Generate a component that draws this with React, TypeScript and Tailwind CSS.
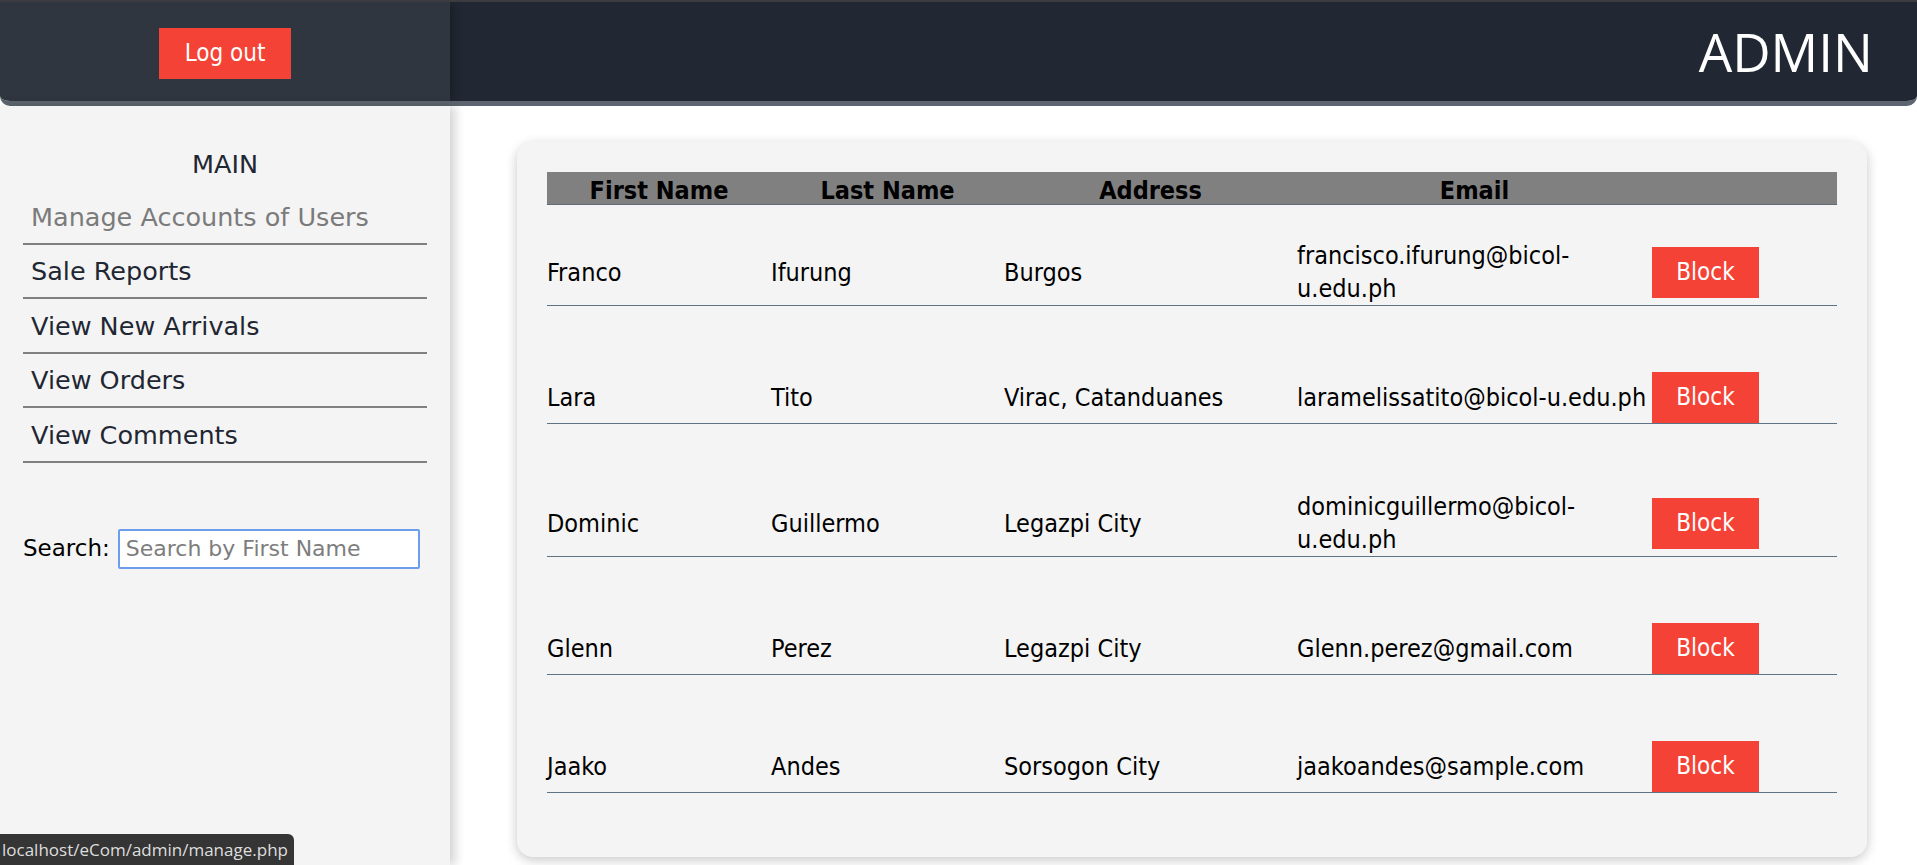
import { useState } from 'react';

type User = { id: number; first: string; last: string; address: string; email: string };

const users: User[] = [
  { id: 1, first: 'Franco', last: 'Ifurung', address: 'Burgos', email: 'francisco.ifurung@bicol-u.edu.ph' },
  { id: 2, first: 'Lara', last: 'Tito', address: 'Virac, Catanduanes', email: 'laramelissatito@bicol-u.edu.ph' },
  { id: 3, first: 'Dominic', last: 'Guillermo', address: 'Legazpi City', email: 'dominicguillermo@bicol-u.edu.ph' },
  { id: 4, first: 'Glenn', last: 'Perez', address: 'Legazpi City', email: 'Glenn.perez@gmail.com' },
  { id: 5, first: 'Jaako', last: 'Andes', address: 'Sorsogon City', email: 'jaakoandes@sample.com' },
];

const menu = ['Manage Accounts of Users', 'Sale Reports', 'View New Arrivals', 'View Orders', 'View Comments'];

const cols = 'grid grid-cols-[224px_233px_293px_355px_184px]';

export default function App() {
  const [search, setSearch] = useState('');

  const list = users.filter((u) => u.first.toLowerCase().includes(search.toLowerCase()));

  return (
    <div className="relative h-screen overflow-hidden bg-white flex flex-col">
      {/* top bar */}
      <header className="flex h-[106px] shrink-0 border-t-2 border-b-[5px] border-t-[#3a3c40] border-b-[#5d6670] rounded-b-[10px] overflow-hidden">
        <div className="w-[450px] bg-[#2f3640] flex items-center justify-center shadow-[4px_0_8px_rgba(0,0,0,0.25)] z-10">
          <button className="bg-[#f44336] text-white h-[51px] w-[132px] mt-[3px] text-[24px] font-['DejaVu_Sans_Condensed','DejaVu_Sans',sans-serif]">
            Log out
          </button>
        </div>
        <div className="flex-1 bg-[#222833] flex items-center justify-end pr-[44px]">
          <span className="text-white text-[53px] font-['Open_Sans',sans-serif] leading-none">ADMIN</span>
        </div>
      </header>

      <div className="flex flex-1 min-h-0">
        {/* sidebar */}
        <aside className="w-[450px] shrink-0 bg-[#f4f4f4] shadow-[5px_0_10px_rgba(0,0,0,0.18)] z-10 pt-[43px] font-['DejaVu_Sans','Verdana',sans-serif]">
          <div className="text-center text-[25.5px] leading-[31px] text-[#1f2733] mb-[10px]">MAIN</div>
          <ul className="mx-[23px]">
            {menu.map((m, i) => (
              <li
                key={m}
                className={`pl-2 pt-[11.5px] pb-[10px] text-[25.5px] leading-[31px] border-b-2 border-[#808080] ${
                  i === 0 ? 'text-[#7b7b7b]' : 'text-[#1f2733]'
                }`}
              >
                {m}
              </li>
            ))}
          </ul>
          <div className="flex items-center mt-[66px] ml-[23px] gap-[8px]">
            <label className="text-[23px] text-black">Search:</label>
            <input
              value={search}
              onChange={(e) => setSearch(e.target.value)}
              placeholder="Search by First Name"
              className="w-[302px] h-[40px] bg-white border-2 border-[#6d9eeb] rounded-[2px] px-[6px] text-[22px] text-black placeholder:text-[#7d7d7d] outline-none"
            />
          </div>
        </aside>

        {/* content */}
        <main className="flex-1 pt-[36px]">
          <div className="ml-[67px] w-[1350px] bg-[#f4f4f4] rounded-[16px] shadow-[0_3px_12px_rgba(0,0,0,0.22)] px-[30px] pt-[30px] pb-[64px] font-['DejaVu_Sans_Condensed','DejaVu_Sans',sans-serif] text-black text-[25px]">
            <div className={`${cols} h-[33px] items-center bg-[#808080] border-b border-[#5e6c7a] font-bold`}>
              <div className="text-center">First Name</div>
              <div className="text-center">Last Name</div>
              <div className="text-center">Address</div>
              <div className="text-center">Email</div>
              <div />
            </div>
            {list.map((u, i) => (
              <div
                key={u.id}
                className={`${cols} items-center border-b border-[#5e7485] leading-[33px] ${i === 0 ? 'pt-[34px]' : 'pt-[66px]'}`}
              >
                <div>{u.first}</div>
                <div>{u.last}</div>
                <div>{u.address}</div>
                <div className="break-words">{u.email}</div>
                <div>
                  <button className="bg-[#f44336] text-white h-[51px] w-[107px] text-[24px]">Block</button>
                </div>
              </div>
            ))}
          </div>
        </main>
      </div>

      <div className="absolute left-0 bottom-0 h-[31px] pl-[2px] pr-[6px] bg-[#353535] text-[#dedede] text-[17px] leading-[31px] rounded-tr-[6px] font-['Open_Sans',sans-serif] z-20">
        localhost/eCom/admin/manage.php
      </div>
    </div>
  );
}
